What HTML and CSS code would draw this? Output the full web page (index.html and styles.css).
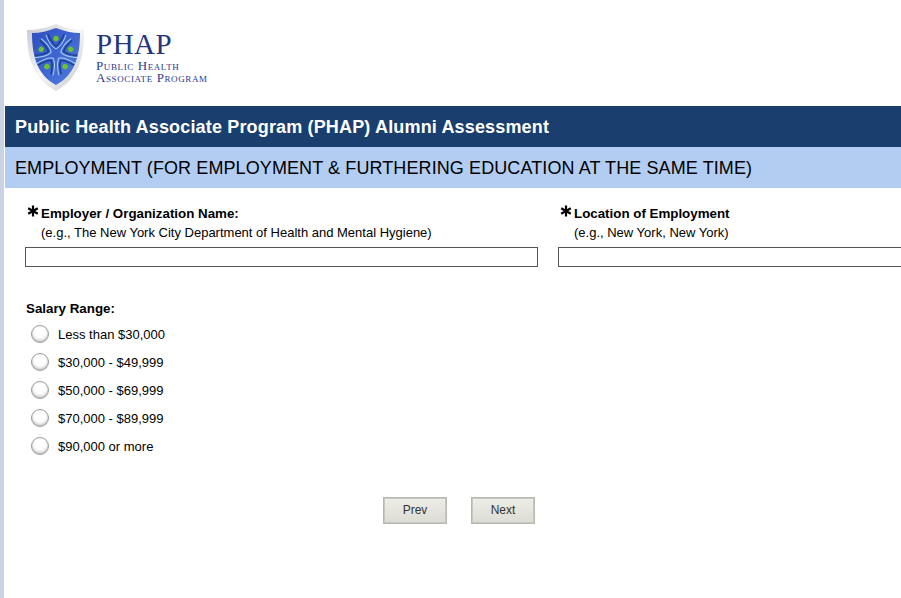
FILE: index.html
```html
<!DOCTYPE html>
<html lang="en">
<head>
    <meta charset="UTF-8">
    <title>PHAP Alumni Assessment</title>
    <link rel="stylesheet" href="styles.css">
</head>
<body>
    <div class="page">
        <div class="logo">
            <svg class="shield" width="62" height="70" viewBox="0 0 62 70">
                <defs>
                    <linearGradient id="rim" x1="0" y1="0" x2="1" y2="1">
                        <stop offset="0" stop-color="#c8cacf"/>
                        <stop offset="0.5" stop-color="#f6f6f7"/>
                        <stop offset="1" stop-color="#c4c6ca"/>
                    </linearGradient>
                    <linearGradient id="blue" x1="0" y1="0" x2="1" y2="1">
                        <stop offset="0" stop-color="#2f4fc0"/>
                        <stop offset="1" stop-color="#4f7de0"/>
                    </linearGradient>
                    <g id="person">
                        <path d="M21 13 Q25 24 31 27 Q37 24 41 13" fill="none" stroke="#a9d3f2" stroke-width="1"/>
                        <path d="M23 12.5 Q27 21.5 31 24 Q35 21.5 39 12.5" fill="none" stroke="#1d3f92" stroke-width="1.5"/>
                        <circle cx="31" cy="16.5" r="2.7" fill="#6cc22e"/>
                    </g>
                </defs>
                <path d="M30 2 C39 6 49 8 58 8 C58 36 53 56 30 69 C7 56 1 36 1 8 C11 8 21 6 30 2Z" fill="url(#rim)"/>
                <path d="M30 6 C38 9 46 11 54 11 C54 36 48 53 30 63 C12 53 6 36 6 11 C14 11 22 9 30 6Z" fill="url(#blue)"/>
                <g transform="translate(-1 0)">
                    <use href="#person"/>
                    <use href="#person" transform="rotate(72 31 32)"/>
                    <use href="#person" transform="rotate(144 31 32)"/>
                    <use href="#person" transform="rotate(216 31 32)"/>
                    <use href="#person" transform="rotate(288 31 32)"/>
                </g>
            </svg>
            <div class="logo-text">
                <div class="logo-name">PHAP</div>
                <div class="logo-sub">Public Health</div>
                <div class="logo-sub">Associate Program</div>
            </div>
        </div>

        <div class="banner">Public Health Associate Program (PHAP) Alumni Assessment</div>
        <div class="section-title">EMPLOYMENT (FOR EMPLOYMENT &amp; FURTHERING EDUCATION AT THE SAME TIME)</div>

        <div class="fields">
            <div class="field field-left">
                <div class="field-label">
                    <svg class="star" width="12" height="12" viewBox="0 0 12 12"><path d="M6 0.5V11.5M1.2 3.2L10.8 8.8M10.8 3.2L1.2 8.8" stroke="#000" stroke-width="2.2"/></svg>
                    Employer / Organization Name:
                </div>
                <div class="field-hint">(e.g., The New York City Department of Health and Mental Hygiene)</div>
                <input type="text" class="text-input">
            </div>
            <div class="field field-right">
                <div class="field-label">
                    <svg class="star" width="12" height="12" viewBox="0 0 12 12"><path d="M6 0.5V11.5M1.2 3.2L10.8 8.8M10.8 3.2L1.2 8.8" stroke="#000" stroke-width="2.2"/></svg>
                    Location of Employment
                </div>
                <div class="field-hint">(e.g., New York, New York)</div>
                <input type="text" class="text-input">
            </div>
        </div>

        <div class="salary">
            <div class="salary-label">Salary Range:</div>
            <div class="radio-row"><span class="radio"></span>Less than $30,000</div>
            <div class="radio-row"><span class="radio"></span>$30,000 - $49,999</div>
            <div class="radio-row"><span class="radio"></span>$50,000 - $69,999</div>
            <div class="radio-row"><span class="radio"></span>$70,000 - $89,999</div>
            <div class="radio-row"><span class="radio"></span>$90,000 or more</div>
        </div>

        <div class="buttons">
            <button class="nav-button">Prev</button>
            <button class="nav-button">Next</button>
        </div>
    </div>
</body>
</html>
```

FILE: styles.css
```css
* {
    margin: 0;
    padding: 0;
    box-sizing: border-box;
}

html, body {
    height: 100%;
    overflow: hidden;
    background: #fff;
}

body {
    font-family: "Liberation Sans", Arial, sans-serif;
    font-size: 13px;
    color: #000;
}

.page {
    height: 598px;
    border-left: 4px solid #c8d4e4;
    overflow: hidden;
}

.logo {
    height: 106px;
    padding: 22px 0 0 22px;
    display: flex;
    gap: 8px;
}

.logo-text {
    color: #2b3990;
    font-family: "Liberation Serif", serif;
    padding-top: 7px;
}

.logo-name {
    font-size: 29px;
    line-height: 31px;
    letter-spacing: 0.5px;
    color: #27347f;
}

.logo-sub {
    font-size: 13px;
    line-height: 12px;
    font-variant: small-caps;
    letter-spacing: 0.6px;
}

.banner {
    height: 41px;
    line-height: 42px;
    margin-left: 1px;
    padding-left: 10px;
    background: #1a3f6e;
    color: #fff;
    font-size: 18px;
    font-weight: bold;
    letter-spacing: 0.16px;
}

.section-title {
    height: 41px;
    line-height: 42px;
    margin-left: 1px;
    padding-left: 10px;
    background: #b3cdf2;
    font-size: 18px;
    letter-spacing: 0.1px;
    white-space: nowrap;
}

.fields {
    display: flex;
    padding: 17px 0 0 21px;
    gap: 20px;
}

.field {
    flex-shrink: 0;
}

.field-left {
    width: 513px;
}

.field-right {
    width: 400px;
}

.field-label {
    height: 17px;
    line-height: 17px;
    padding-left: 2px;
    font-weight: bold;
    font-size: 13.33px;
    display: flex;
    gap: 2px;
}

.star {
    flex-shrink: 0;
}

.field-hint {
    height: 18px;
    line-height: 22px;
    padding-left: 16px;
}

.text-input {
    display: block;
    width: 100%;
    height: 20px;
    margin-top: 7px;
    border: 1px solid #555;
    background: #fff;
}

.salary {
    padding: 33px 0 0 22px;
}

.salary-label {
    height: 17px;
    line-height: 18px;
    font-weight: bold;
    font-size: 13.33px;
    margin-bottom: 3px;
}

.radio-row {
    height: 28px;
    display: flex;
    align-items: center;
    gap: 9px;
    padding-left: 5px;
}

.radio {
    width: 18px;
    height: 18px;
    border-radius: 50%;
    border: 1px solid #9c9c9c;
    background: radial-gradient(circle at 50% 32%, #fff 45%, #cfcfcf 100%);
    box-shadow: inset 0 -1px 2px #bbb;
}

.buttons {
    display: flex;
    gap: 24px;
    padding: 37px 0 0 379px;
}

.nav-button {
    width: 64px;
    height: 27px;
    padding-bottom: 2px;
    border: 1px solid #b8b8b2;
    outline: 1px solid #c8c8c2;
    outline-offset: -2px;
    background: linear-gradient(#eeeee8, #dcdcd4);
    color: #333;
    font-family: "Liberation Sans", Arial, sans-serif;
    font-size: 12px;
}
```
